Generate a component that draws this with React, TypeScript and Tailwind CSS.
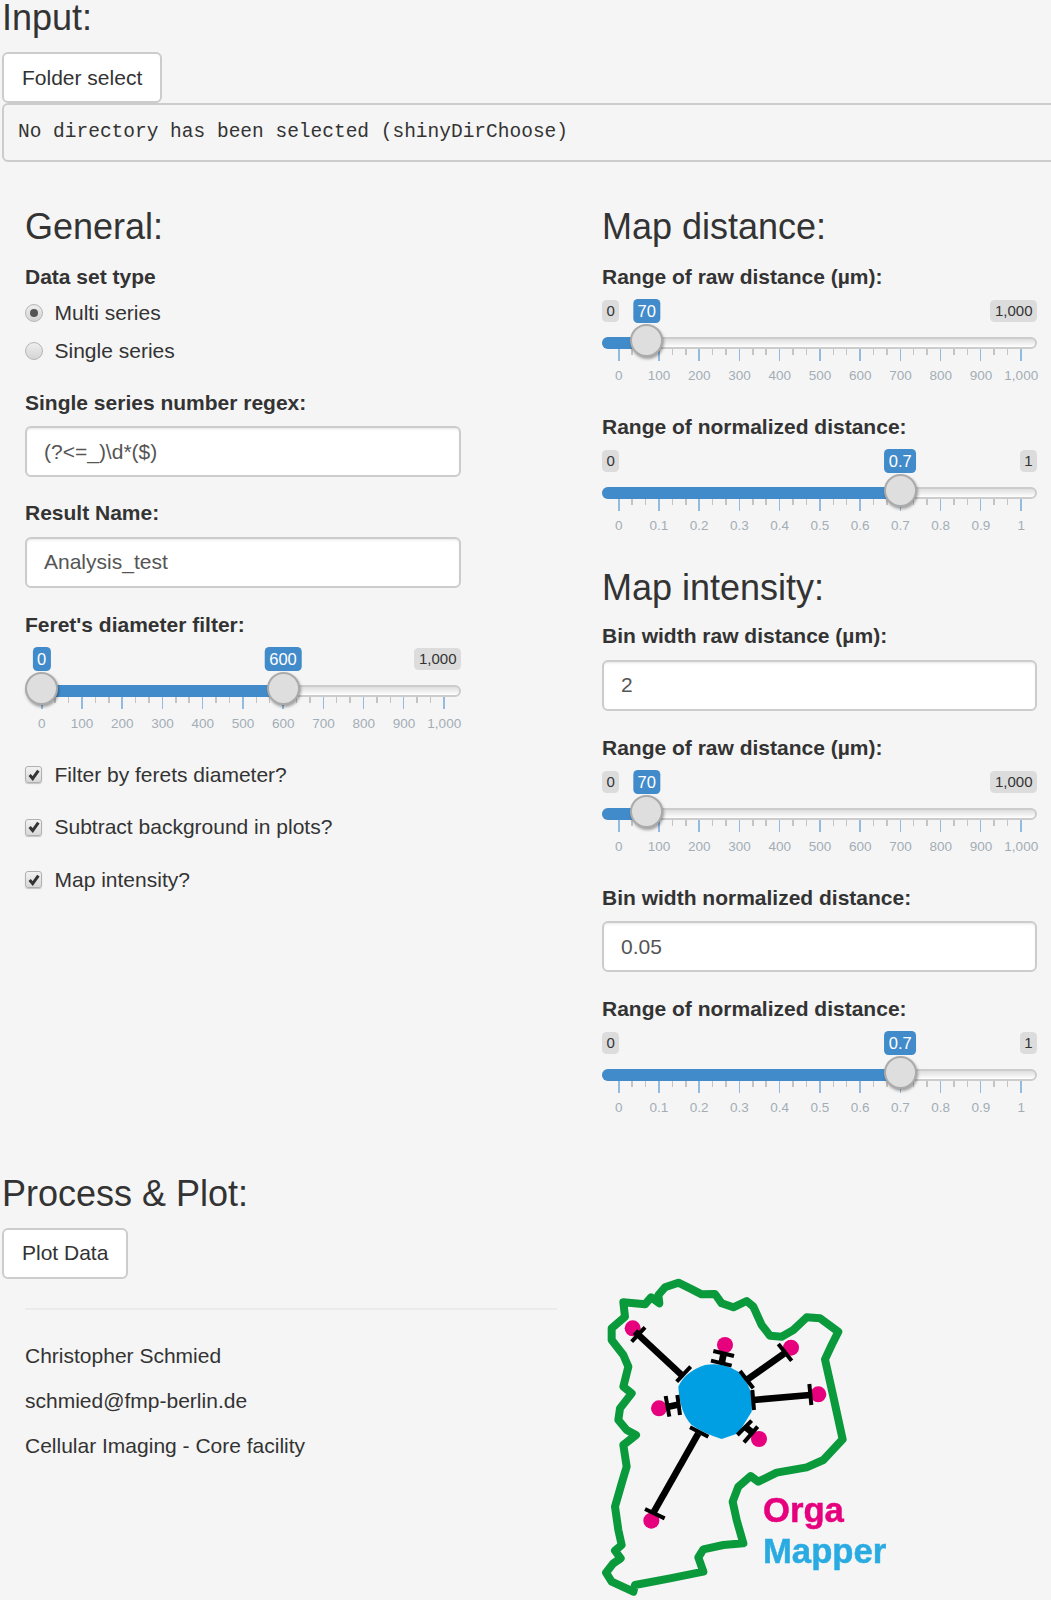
import React from 'react';

const LABEL = 'block h-[30px] text-[21px] leading-[30px] font-bold text-[#333]';
const BUTTON = 'block h-[51px] bg-white border-2 border-[#ccc] rounded-[6px] px-[18px] whitespace-nowrap text-[21px] leading-[30px] text-[#333]';
const H3 = 'text-[36px] leading-[39.6px] font-normal text-[#333]';

function TextField({ label, value }: { label: string; value: string }) {
  return (
    <div className="mb-[22px]">
      <label className={`${LABEL} mb-[8.5px]`}>{label}</label>
      <input
        readOnly
        value={value}
        className="block w-full h-[51px] bg-white border-2 border-[#ccc] rounded-[6px] px-[17px] text-[21px] text-[#555] shadow-[inset_0_1.5px_1.5px_rgba(0,0,0,0.075)] outline-none"
      />
    </div>
  );
}

function Handle({ value }: { value: number }) {
  return (
    <div
      className="absolute top-[32px] w-[33px] h-[33px] -ml-[16.5px] rounded-full bg-[#dedede] border-2 border-[#ababab] shadow-[1px_2px_3px_rgba(0,0,0,0.35)]"
      style={{ left: `${16.5 + value * 402.5}px` }}
    />
  );
}

function Badge({ value, text }: { value: number; text: string }) {
  return (
    <span
      className="absolute top-[7px] -translate-x-1/2 h-[24px] px-[4.5px] rounded-[4.5px] bg-[#428bca] text-white text-[16.5px] leading-[24px]"
      style={{ left: `${16.5 + value * 402.5}px` }}
    >
      {text}
    </span>
  );
}

function GrayBadge({ text, right }: { text: string; right?: boolean }) {
  return (
    <span className={`absolute top-[8px] ${right ? 'right-0' : 'left-0'} h-[22px] px-[4.5px] rounded-[4.5px] bg-[#dcdcdc] text-[#333] text-[15px] leading-[22px]`}>
      {text}
    </span>
  );
}

function Slider({
  label,
  from,
  to,
  labels,
  minText,
  maxText,
  toText,
  fromText,
}: {
  label: string;
  from?: number;
  to: number;
  labels: string[];
  minText?: string;
  maxText: string;
  toText: string;
  fromText?: string;
}) {
  const start = from === undefined ? 0 : 16.5 + from * 402.5;
  const end = 16.5 + to * 402.5;
  return (
    <div className="mb-[15px]">
      <label className={LABEL}>{label}</label>
      <div className="relative h-[105px] pt-[45px]">
        {minText && <GrayBadge text={minText} />}
        <GrayBadge text={maxText} right />
        {fromText && from !== undefined && <Badge value={from} text={fromText} />}
        <Badge value={to} text={toText} />
        <div className="relative h-[12px] rounded-full border-2 border-[#ccc] bg-linear-to-b from-[#dedede] to-white">
          <div
            className="absolute -top-[2px] -left-[2px] h-[12px] rounded-l-full bg-[#428bca]"
            style={{ marginLeft: `${start}px`, width: `${end - start}px` }}
          />
        </div>
        <div className="flex justify-between w-[404px] ml-[16px]">
          {Array.from({ length: 31 }).map((_, i) => (
            <div key={i} className={i % 3 === 0 ? 'w-[1.5px] h-[12px] bg-[#93bbdf]' : 'w-[1.5px] h-[6px] bg-[#c4c4c4]'} />
          ))}
        </div>
        <div className="flex justify-between w-[404px] ml-[16px] mt-[7px]">
          {labels.map((t) => (
            <div key={t} className="w-[1.5px] flex justify-center whitespace-nowrap text-[13.5px] leading-[16px] text-[#a3adb5]">
              {t}
            </div>
          ))}
        </div>
        {from !== undefined && <Handle value={from} />}
        <Handle value={to} />
      </div>
    </div>
  );
}

function Radio({ label, checked }: { label: string; checked?: boolean }) {
  return (
    <div className="flex items-center h-[30px] mb-[7.5px] text-[21px] text-[#333]">
      <span className="flex items-center justify-center w-[18px] h-[18px] rounded-full border border-[#b5b5b5] bg-linear-to-b from-[#eee] to-[#d4d4d4] mr-[11.5px]">
        {checked && <span className="w-[8px] h-[8px] rounded-full bg-[#555]" />}
      </span>
      {label}
    </div>
  );
}

function CheckBox({ label }: { label: string }) {
  return (
    <div className="flex items-center h-[30px] mb-[22.5px] text-[21px] text-[#333]">
      <span className="flex items-center justify-center w-[17px] h-[17px] rounded-[3px] border border-[#b0b0b0] bg-linear-to-b from-[#f2f2f2] to-[#d8d8d8] shadow-[0_1px_1px_rgba(0,0,0,0.2)] mr-[12.5px]">
        <svg viewBox="0 0 16 16" className="w-[14px] h-[14px]">
          <path d="M3 8 L6.5 12 L13 3" fill="none" stroke="#333" strokeWidth="3.4" />
        </svg>
      </span>
      {label}
    </div>
  );
}

function Logo() {
  const green =
    'M100 97 L165 103 L183 82 L208 100 L205 75 L225 52 L265 38 L300 55 L335 73 L375 72 L395 100 L430 112 L470 93 L490 110 L515 165 L540 197 L575 200 L610 180 L650 142 L690 145 L745 185 L725 225 L705 268 L730 380 L758 508 L700 570 L650 592 L560 608 L505 635 L482 618 L445 650 L428 695 L440 750 L460 820 L400 825 L340 838 L325 862 L340 905 L240 925 L135 945 L130 965 L65 935 L48 908 L70 880 L92 865 L75 842 L95 825 L85 780 L75 710 L95 640 L110 590 L100 525 L138 495 L110 480 L85 450 L90 415 L125 370 L100 350 L115 290 L100 255 L65 210 L65 175 L105 140 Z';
  const spokes = [
    [135, 185, 280, 320],
    [400, 255, 395, 280],
    [470, 330, 590, 245],
    [490, 390, 660, 375],
    [465, 470, 490, 490],
    [235, 410, 270, 403],
    [192, 725, 325, 490],
  ];
  const caps = [
    [165, 172, 125, 215],
    [302, 290, 260, 335],
    [370, 243, 432, 258],
    [363, 272, 425, 287],
    [565, 222, 605, 272],
    [450, 303, 490, 355],
    [658, 342, 664, 405],
    [487, 360, 492, 420],
    [503, 470, 462, 517],
    [485, 452, 442, 495],
    [227, 378, 238, 440],
    [262, 375, 270, 435],
    [165, 717, 224, 745],
    [300, 472, 355, 500],
  ];
  const dots = [
    [128, 175],
    [405, 225],
    [603, 233],
    [685, 373],
    [507, 507],
    [207, 415],
    [184, 752],
  ];
  return (
    <svg viewBox="0 0 960 990" className="block w-[320px] h-[330px] -ml-[12px] mt-[1px] blur-[0.5px]">
      <path d={green} fill="none" stroke="#0a9a3c" strokeWidth="24" strokeLinejoin="round" />
      <path
        d="M265 350 Q285 305 345 285 Q400 275 445 305 Q480 340 487 385 L485 425 L445 490 L395 507 Q340 490 305 465 Q270 430 265 350 Z"
        fill="#009fe3"
      />
      {dots.map(([cx, cy]) => (
        <circle key={cx} cx={cx} cy={cy} r="24" fill="#e6007e" />
      ))}
      {spokes.map(([x1, y1, x2, y2]) => (
        <line key={x1} x1={x1} y1={y1} x2={x2} y2={y2} stroke="#000" strokeWidth="20" />
      ))}
      {caps.map(([x1, y1, x2, y2]) => (
        <line key={x1} x1={x1} y1={y1} x2={x2} y2={y2} stroke="#000" strokeWidth="12" />
      ))}
      <text x="519" y="755" fontSize="104" fontWeight="700" fill="#e6007e" stroke="#e6007e" strokeWidth="1.5" fontFamily="Liberation Sans, sans-serif">
        Orga
      </text>
      <text x="519" y="880" fontSize="104" fontWeight="700" fill="#29abe2" stroke="#29abe2" strokeWidth="1.5" fontFamily="Liberation Sans, sans-serif">
        Mapper
      </text>
    </svg>
  );
}

const RAW = ['0', '100', '200', '300', '400', '500', '600', '700', '800', '900', '1,000'];
const NORM = ['0', '0.1', '0.2', '0.3', '0.4', '0.5', '0.6', '0.7', '0.8', '0.9', '1'];

export default function App() {
  return (
    <div className="h-[1600px] overflow-hidden bg-[#f5f5f5] font-['Liberation_Sans',sans-serif] text-[#333]">
      {/* Input */}
      <div className="pl-[2px]">
        <h3 className="text-[36px] leading-[36px] font-normal text-[#333] mb-[16px]">Input:</h3>
        <button className={BUTTON}>Folder select</button>
        <pre className="w-[1200px] h-[59px] border-2 border-[#ccc] rounded-[6px] px-[14px] pt-[13px] text-[19.5px] leading-[28px] font-['Liberation_Mono',monospace] text-[#333]">
          No directory has been selected (shinyDirChoose)
        </pre>
      </div>

      <div className="flex pl-[25px] mt-[45px]">
        {/* General */}
        <div className="w-[577px]">
          <div className="w-[436px]">
            <h3 className={`${H3} mb-[15px]`}>General:</h3>
            <label className={`${LABEL} mb-[6.5px]`}>Data set type</label>
            <Radio label="Multi series" checked />
            <Radio label="Single series" />
            <div className="h-[14.5px]" />
            <TextField label="Single series number regex:" value="(?<=_)\d*($)" />
            <div className="-mt-[1px]">
              <TextField label="Result Name:" value="Analysis_test" />
            </div>
            <Slider
              label="Feret's diameter filter:"
              from={0}
              fromText="0"
              to={0.6}
              toText="600"
              maxText="1,000"
              labels={RAW}
            />
            <CheckBox label="Filter by ferets diameter?" />
            <CheckBox label="Subtract background in plots?" />
            <CheckBox label="Map intensity?" />
          </div>
        </div>

        {/* Map distance / intensity */}
        <div className="w-[435px]">
          <h3 className={`${H3} mb-[15px]`}>Map distance:</h3>
          <Slider label="Range of raw distance (µm):" to={0.07} toText="70" minText="0" maxText="1,000" labels={RAW} />
          <Slider label="Range of normalized distance:" to={0.7} toText="0.7" minText="0" maxText="1" labels={NORM} />
          <h3 className={`${H3} mt-[21px] mb-[14px]`}>Map intensity:</h3>
          <TextField label="Bin width raw distance (µm):" value="2" />
          <Slider label="Range of raw distance (µm):" to={0.07} toText="70" minText="0" maxText="1,000" labels={RAW} />
          <TextField label="Bin width normalized distance:" value="0.05" />
          <Slider label="Range of normalized distance:" to={0.7} toText="0.7" minText="0" maxText="1" labels={NORM} />
        </div>
      </div>

      {/* Process & Plot */}
      <div className="pl-[2px] mt-[30px]">
        <h3 className={`${H3} mb-[14px]`}>Process &amp; Plot:</h3>
        <button className={BUTTON}>Plot Data</button>
      </div>
      <div className="flex pl-[25px] -mt-[10px]">
        <div className="w-[577px]">
          <div className="w-[532px] mt-[39px] border-t-2 border-[#ebebeb] pt-[31px] text-[21px] leading-[30px]">
            <p className="mb-[15px]">Christopher Schmied</p>
            <p className="mb-[15px]">schmied@fmp-berlin.de</p>
            <p>Cellular Imaging - Core facility</p>
          </div>
        </div>
        <Logo />
      </div>
    </div>
  );
}
